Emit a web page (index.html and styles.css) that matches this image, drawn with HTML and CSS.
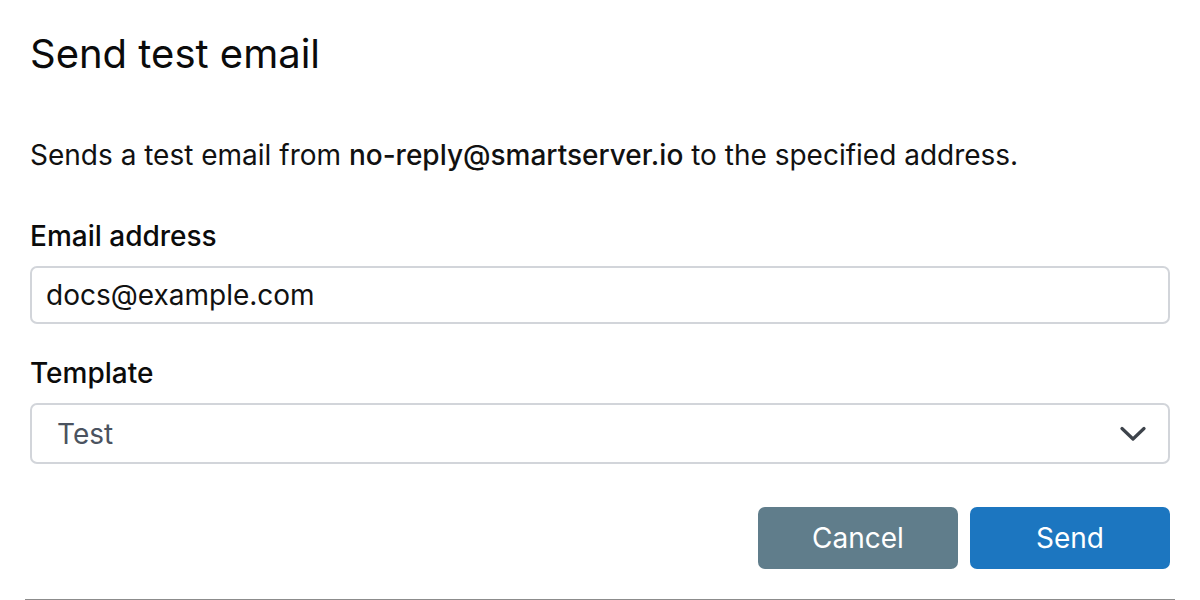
FILE: index.html
```html
<!DOCTYPE html>
<html lang="en">
<head>
<meta charset="utf-8">
<title>Send test email</title>
<link rel="stylesheet" href="styles.css">
</head>
<body>
<div class="dialog">
  <h1 class="title">Send test email</h1>
  <p class="desc">Sends a test email from <strong>no-reply@smartserver.io</strong> to the specified address.</p>
  <div class="field">
    <label class="label" for="email">Email address</label>
    <input class="input" id="email" type="text" value="docs@example.com">
  </div>
  <div class="field field-template">
    <label class="label">Template</label>
    <div class="select">
      <span class="select-value">Test</span>
      <svg class="chevron" width="26" height="16" viewBox="0 0 26 16"><path d="M2 2.5 L13 13 L24 2.5" fill="none" stroke="#3d434b" stroke-width="3.2" stroke-linecap="round" stroke-linejoin="round"/></svg>
    </div>
  </div>
  <div class="actions">
    <button class="btn btn-cancel" type="button">Cancel</button>
    <button class="btn btn-send" type="button">Send</button>
  </div>
</div>
<div class="rule"></div>
</body>
</html>
```

FILE: styles.css
```css
html, body {
  margin: 0;
  padding: 0;
  background: #ffffff;
}
body {
  font-family: Inter, "Liberation Sans", sans-serif;
  color: #0a0a0a;
}
.dialog {
  padding: 30px 30px 0 30px;
}
.title {
  margin: 0;
  font-size: 40px;
  line-height: 48px;
  font-weight: 400;
  color: #0b0b0b;
}
.desc {
  margin: 57px 0 0 0;
  font-size: 28px;
  line-height: 40px;
  color: #111111;
}
.desc strong {
  font-weight: 500;
}
.field {
  margin-top: 43px;
  display: flex;
  flex-direction: column;
}
.field-template {
  margin-top: 31px;
}
.label {
  font-size: 28px;
  line-height: 36px;
  font-weight: 500;
  color: #0b0b0b;
  margin-bottom: 12px;
}
.input {
  box-sizing: border-box;
  height: 58px;
  border: 2px solid #d2d5da;
  border-radius: 7px;
  padding: 0 14px;
  font-family: Inter, "Liberation Sans", sans-serif;
  font-size: 28px;
  color: #111111;
  outline: none;
  width: 100%;
}
.select {
  box-sizing: border-box;
  height: 61px;
  border: 2px solid #d2d5da;
  border-radius: 7px;
  padding: 0 22px 0 25px;
  display: flex;
  align-items: center;
  justify-content: space-between;
}
.select-value {
  font-size: 28px;
  color: #4b5360;
}
.chevron {
  display: block;
}
.actions {
  margin-top: 43px;
  display: flex;
  justify-content: flex-end;
  gap: 12px;
}
.btn {
  width: 200px;
  height: 62px;
  border: none;
  border-radius: 7px;
  font-family: Inter, "Liberation Sans", sans-serif;
  font-size: 28px;
  color: #ffffff;
  cursor: pointer;
}
.btn-cancel {
  background: #607d8b;
}
.btn-send {
  background: #1c76c0;
}
.rule {
  margin: 30px 25px 0 25px;
  height: 2px;
  background: #8c8c8c;
}
```
